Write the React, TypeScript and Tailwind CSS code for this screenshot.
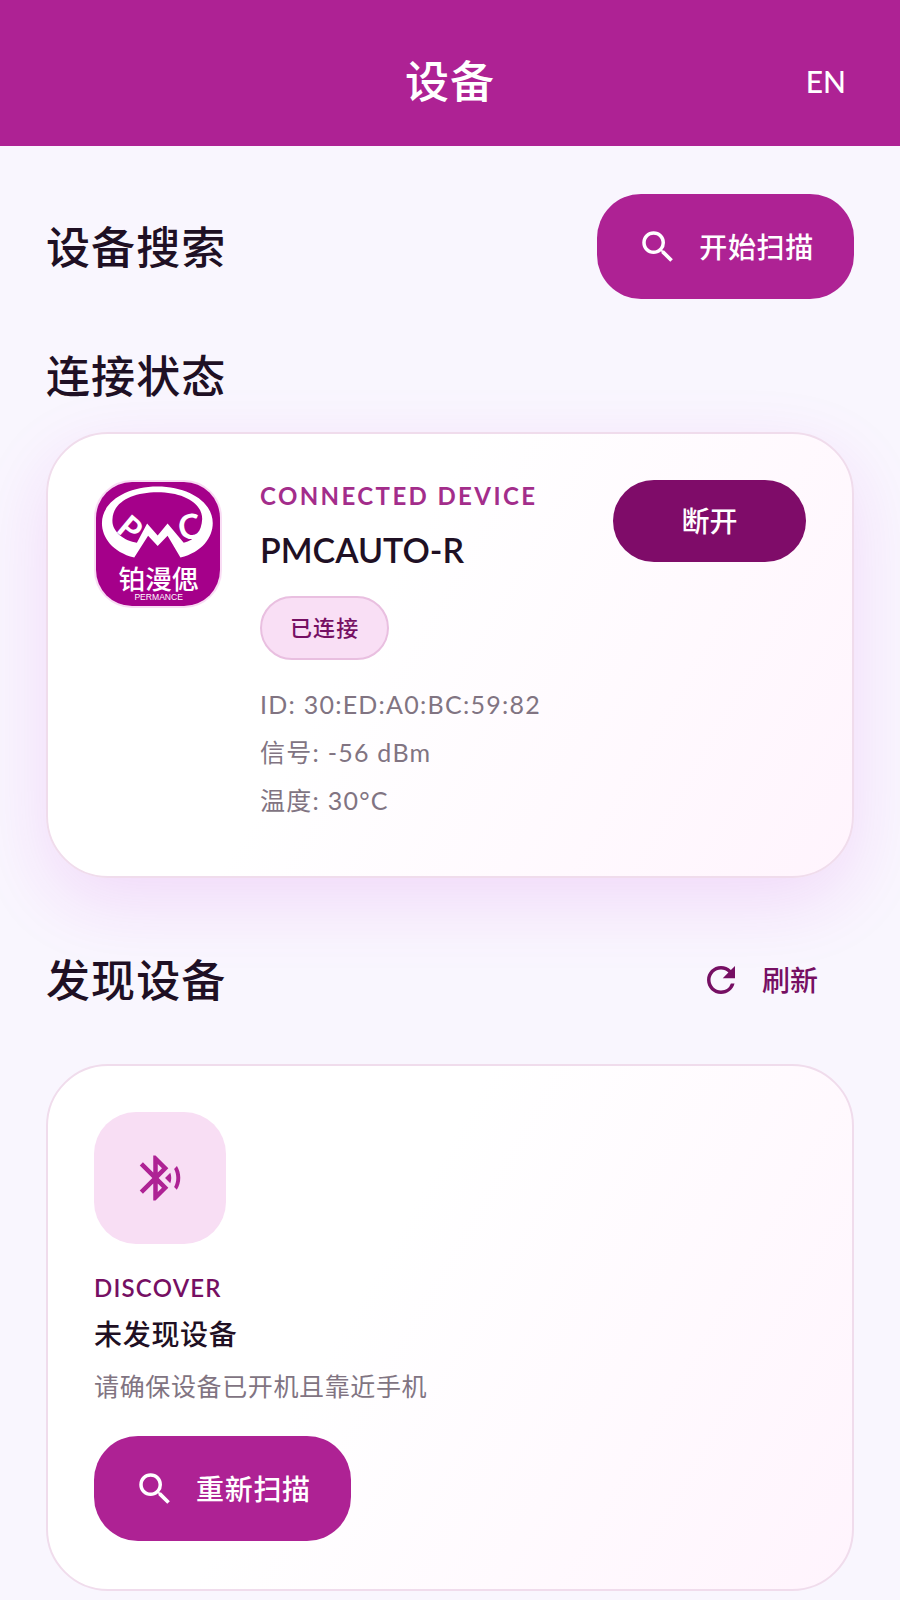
import React, { useState } from "react";
import { MdBluetoothSearching, MdRefresh, MdSearch } from "react-icons/md";

interface ScanButtonProps {
  label: string;
}

const device = {
  name: "PMCAUTO-R",
  details: ["ID: 30:ED:A0:BC:59:82", "信号: -56 dBm", "温度: 30°C"],
};

function ScanButton({ label }: ScanButtonProps) {
  return (
    <button className="flex items-center gap-5 h-[105px] px-10 rounded-[44px] bg-[#ae2294] text-white text-[28px] leading-10 font-medium tracking-wide">
      <MdSearch className="size-[42px]" />
      {label}
    </button>
  );
}

function Logo() {
  return (
    <svg
      viewBox="0 0 376 376"
      className="size-[128px] shrink-0 rounded-[38px] border-2 border-[#f9dcf4]"
      role="img"
      aria-label="铂漫偲 PERMANCE"
    >
      <rect width="376" height="376" fill="#a5008a" />
      <path
        fill="#fff"
        fillRule="evenodd"
        d="M116 229C50 212 18 168 18 124C18 62 90 14 186 14C282 14 354 62 354 124C354 168 322 212 256 229L217 163L187 194L158 163ZM50 112C52 60 112 31 186 31C262 31 322 62 322 112C320 150 300 176 266 184L217 126L187 162L155 126L124 184C85 178 46 150 50 112Z"
      />
      <g fill="#fff" fontWeight="700" className="font-['Lato']">
        <text x="56" y="152" fontSize="98" transform="rotate(40 62 152)">P</text>
        <text x="284" y="173" fontSize="104" textAnchor="middle" transform="rotate(-12 284 136)">C</text>
      </g>
      <text x="190" y="324" fontSize="81" fontWeight="500" fill="#fff" textAnchor="middle">
        铂漫偲
      </text>
      <text x="190" y="359" fontSize="26" fill="#fff" textAnchor="middle" className="font-['Liberation_Sans']">
        PERMANCE
      </text>
    </svg>
  );
}

function App() {
  const [lang, setLang] = useState("EN");

  return (
    <div
      lang="zh-CN"
      className="min-h-screen bg-[#f9f6fe] text-[#1f1024] font-['Lato','Noto_Sans_CJK_SC',sans-serif]"
    >
      <header className="grid grid-cols-3 items-center h-[146px] pt-4 px-[54px] bg-[#ae2294] text-white">
        <h1 className="col-start-2 text-center text-[44px] leading-[60px] font-medium tracking-wide">设备</h1>
        <button
          className="justify-self-end text-3xl leading-10 font-medium"
          onClick={() => setLang(lang === "EN" ? "中" : "EN")}
        >
          {lang}
        </button>
      </header>

      <main className="px-[46px] pt-12 pb-2">
        <div className="flex items-center justify-between">
          <h2 className="text-[44px] leading-[60px] font-medium tracking-wide">设备搜索</h2>
          <ScanButton label="开始扫描" />
        </div>

        <h2 className="mt-[47px] text-[44px] leading-[60px] font-medium tracking-wide">连接状态</h2>

        <section className="flex items-start mt-[26px] h-[446px] p-[46px] rounded-[62px] border-2 border-[#f0dcec] bg-linear-120 from-white from-40% to-[#fff4fd] shadow-[0_24px_72px_rgba(190,34,220,0.13)]">
          <Logo />
          <div className="flex flex-col items-start ml-[38px]">
            <p className="text-2xl leading-8 font-bold tracking-widest text-[#a32d8b]">CONNECTED DEVICE</p>
            <h3 className="mt-3 text-[34px] leading-[52px] font-semibold">{device.name}</h3>
            <span className="flex items-center mt-5 h-16 px-7 rounded-full border-2 border-[#e9bfe0] bg-[#f9dff5] text-[22px] leading-8 font-medium tracking-wider text-[#760f63]">
              已连接
            </span>
            <div className="mt-5 text-[25px] leading-[48px] tracking-wider text-[#817482]">
              {device.details.map((detail) => (
                <p key={detail}>{detail}</p>
              ))}
            </div>
          </div>
          <button className="ml-auto h-[82px] w-[193px] rounded-full bg-[#7f0c69] text-white text-[28px] leading-10 font-medium">
            断开
          </button>
        </section>

        <div className="flex items-center justify-between mt-[72px]">
          <h2 className="text-[44px] leading-[60px] font-medium tracking-wide">发现设备</h2>
          <button className="flex items-center gap-5 pr-9 text-[28px] leading-10 font-medium text-[#760f63]">
            <MdRefresh className="size-[42px]" />
            刷新
          </button>
        </div>

        <section className="flex flex-col items-start mt-[54px] px-[46px] pt-[46px] pb-12 rounded-[62px] border-2 border-[#f0dcec] bg-linear-120 from-white from-40% to-[#fff4fd]">
          <div className="flex items-center justify-center size-[132px] rounded-[42px] bg-[#f8def4]">
            <MdBluetoothSearching className="size-[54px] text-[#ae2294]" />
          </div>
          <p className="mt-7 text-2xl leading-8 font-semibold tracking-wider text-[#760f63]">DISCOVER</p>
          <h3 className="mt-2.5 text-[28px] leading-10 font-medium tracking-wide">未发现设备</h3>
          <p className="mt-3 mb-[30px] text-[25px] leading-10 tracking-wide text-[#817482]">请确保设备已开机且靠近手机</p>
          <ScanButton label="重新扫描" />
        </section>
      </main>
    </div>
  );
}

export default App;
